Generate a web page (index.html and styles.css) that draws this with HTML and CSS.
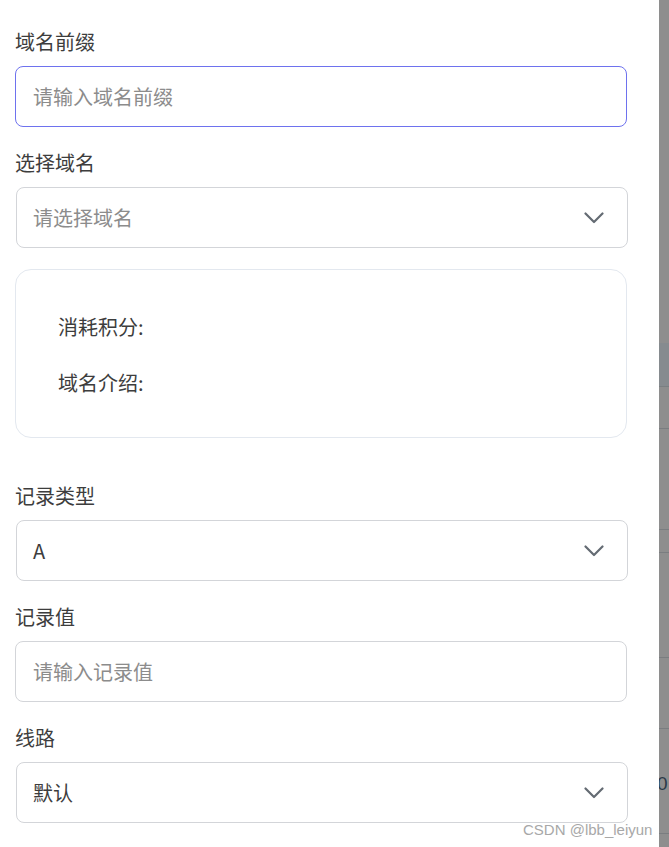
FILE: index.html
```html
<!DOCTYPE html>
<html lang="zh-CN">
<head>
<meta charset="utf-8">
<title>添加域名解析</title>
<link rel="stylesheet" href="styles.css">
</head>
<body>
<div class="screen">
  <div class="panel">
    <div class="field">
      <label class="label">域名前缀</label>
      <div class="control focused"><span class="placeholder">请输入域名前缀</span></div>
    </div>
    <div class="field">
      <label class="label">选择域名</label>
      <div class="control select"><span class="placeholder">请选择域名</span>
        <svg class="chev" viewBox="0 0 20 12" width="20" height="12"><path d="M1.5 1.5 L10 10 L18.5 1.5" fill="none" stroke="#646b73" stroke-width="2.2" stroke-linecap="round" stroke-linejoin="round"/></svg>
      </div>
    </div>
    <div class="card">
      <div class="card-row">消耗积分:</div>
      <div class="card-row">域名介绍:</div>
    </div>
    <div class="field">
      <label class="label">记录类型</label>
      <div class="control select"><span class="value">A</span>
        <svg class="chev" viewBox="0 0 20 12" width="20" height="12"><path d="M1.5 1.5 L10 10 L18.5 1.5" fill="none" stroke="#646b73" stroke-width="2.2" stroke-linecap="round" stroke-linejoin="round"/></svg>
      </div>
    </div>
    <div class="field">
      <label class="label">记录值</label>
      <div class="control"><span class="placeholder">请输入记录值</span></div>
    </div>
    <div class="field">
      <label class="label">线路</label>
      <div class="control select"><span class="value">默认</span>
        <svg class="chev" viewBox="0 0 20 12" width="20" height="12"><path d="M1.5 1.5 L10 10 L18.5 1.5" fill="none" stroke="#646b73" stroke-width="2.2" stroke-linecap="round" stroke-linejoin="round"/></svg>
      </div>
    </div>
  </div>
  <div class="backdrop">
    <div class="bd-row bd-a"></div>
    <div class="bd-row bd-band"></div>
    <div class="bd-row bd-b"></div>
    <div class="bd-row bd-c"></div>
    <div class="bd-row bd-d"></div>
    <div class="bd-row bd-e"></div>
    <div class="bd-row bd-f"></div>
    <div class="bd-row bd-g"><span class="bd-num">0</span></div>
  </div>
  <div class="watermark">CSDN @lbb_leiyun</div>
</div>
</body>
</html>
```
FILE: styles.css
```css
html, body {
  margin: 0;
  padding: 0;
}
html {
  background: #8e8e8e;
}
body {
  width: 669px;
  height: 847px;
  overflow: hidden;
  font-family: "Noto Sans CJK SC", "Noto Sans", sans-serif;
  color: #3a3a3a;
  background: #8e8e8e;
}
.screen {
  position: relative;
  display: grid;
  grid-template-columns: 659px 10px;
  width: 669px;
  height: 847px;
  background-color: #8e8e8e;
}
.panel {
  height: 847px;
  background: #ffffff;
  box-sizing: border-box;
  padding: 28px 32px 0 15px;
  display: flex;
  flex-direction: column;
}
.field {
  display: flex;
  flex-direction: column;
  gap: 10px;
  margin-bottom: 22px;
}
.label {
  font-size: 20px;
  line-height: 28px;
  height: 28px;
  color: #3d3d3d;
}
.control {
  height: 61px;
  box-sizing: border-box;
  border: 1px solid #d3d5d9;
  border-radius: 8px;
  display: flex;
  align-items: center;
  padding: 0 23px 0 17px;
  font-size: 20px;
  background: #fff;
}
.control.focused {
  border-color: #6e72ee;
}
.control.select {
  margin-left: 1px;
  margin-right: -1px;
  padding-left: 16px;
  justify-content: space-between;
}
.placeholder {
  color: #8c8c8c;
}
.value {
  color: #3d3d3d;
}
.chev {
  display: block;
}
.card {
  margin-top: -1px;
  margin-bottom: 44px;
  height: 169px;
  box-sizing: border-box;
  border: 1px solid #e3e8ef;
  border-radius: 16px;
  padding: 43px 42px 0;
  display: flex;
  flex-direction: column;
  gap: 28px;
}
.card-row {
  font-size: 20px;
  line-height: 28px;
  color: #3d3d3d;
}
.backdrop {
  height: 847px;
  background-color: #8e8e8e;
  display: flex;
  flex-direction: column;
  overflow: hidden;
}
.bd-row {
  flex: 0 0 auto;
  box-sizing: border-box;
  background-color: #8e8e8e;
  border-bottom: 1px solid #7a7d80;
}
.bd-a { height: 343px; border-bottom: none; }
.bd-band { height: 44px; background-color: #868b8f; border-bottom: 1px solid #7a7f82; }
.bd-b { height: 42px; }
.bd-c { height: 101px; }
.bd-d { height: 23px; }
.bd-e { height: 105px; }
.bd-f { height: 71px; }
.bd-g { height: 105px; position: relative; overflow: hidden; }
.bd-num {
  position: absolute;
  left: -2px;
  top: 45px;
  font-family: "Liberation Sans", sans-serif;
  font-size: 19px;
  line-height: 19px;
  color: #2b3a48;
}
.watermark {
  position: absolute;
  left: 523px;
  top: 820px;
  font-family: "Liberation Sans", sans-serif;
  font-size: 15px;
  line-height: 20px;
  color: #a8a8a8;
  white-space: nowrap;
}
```
